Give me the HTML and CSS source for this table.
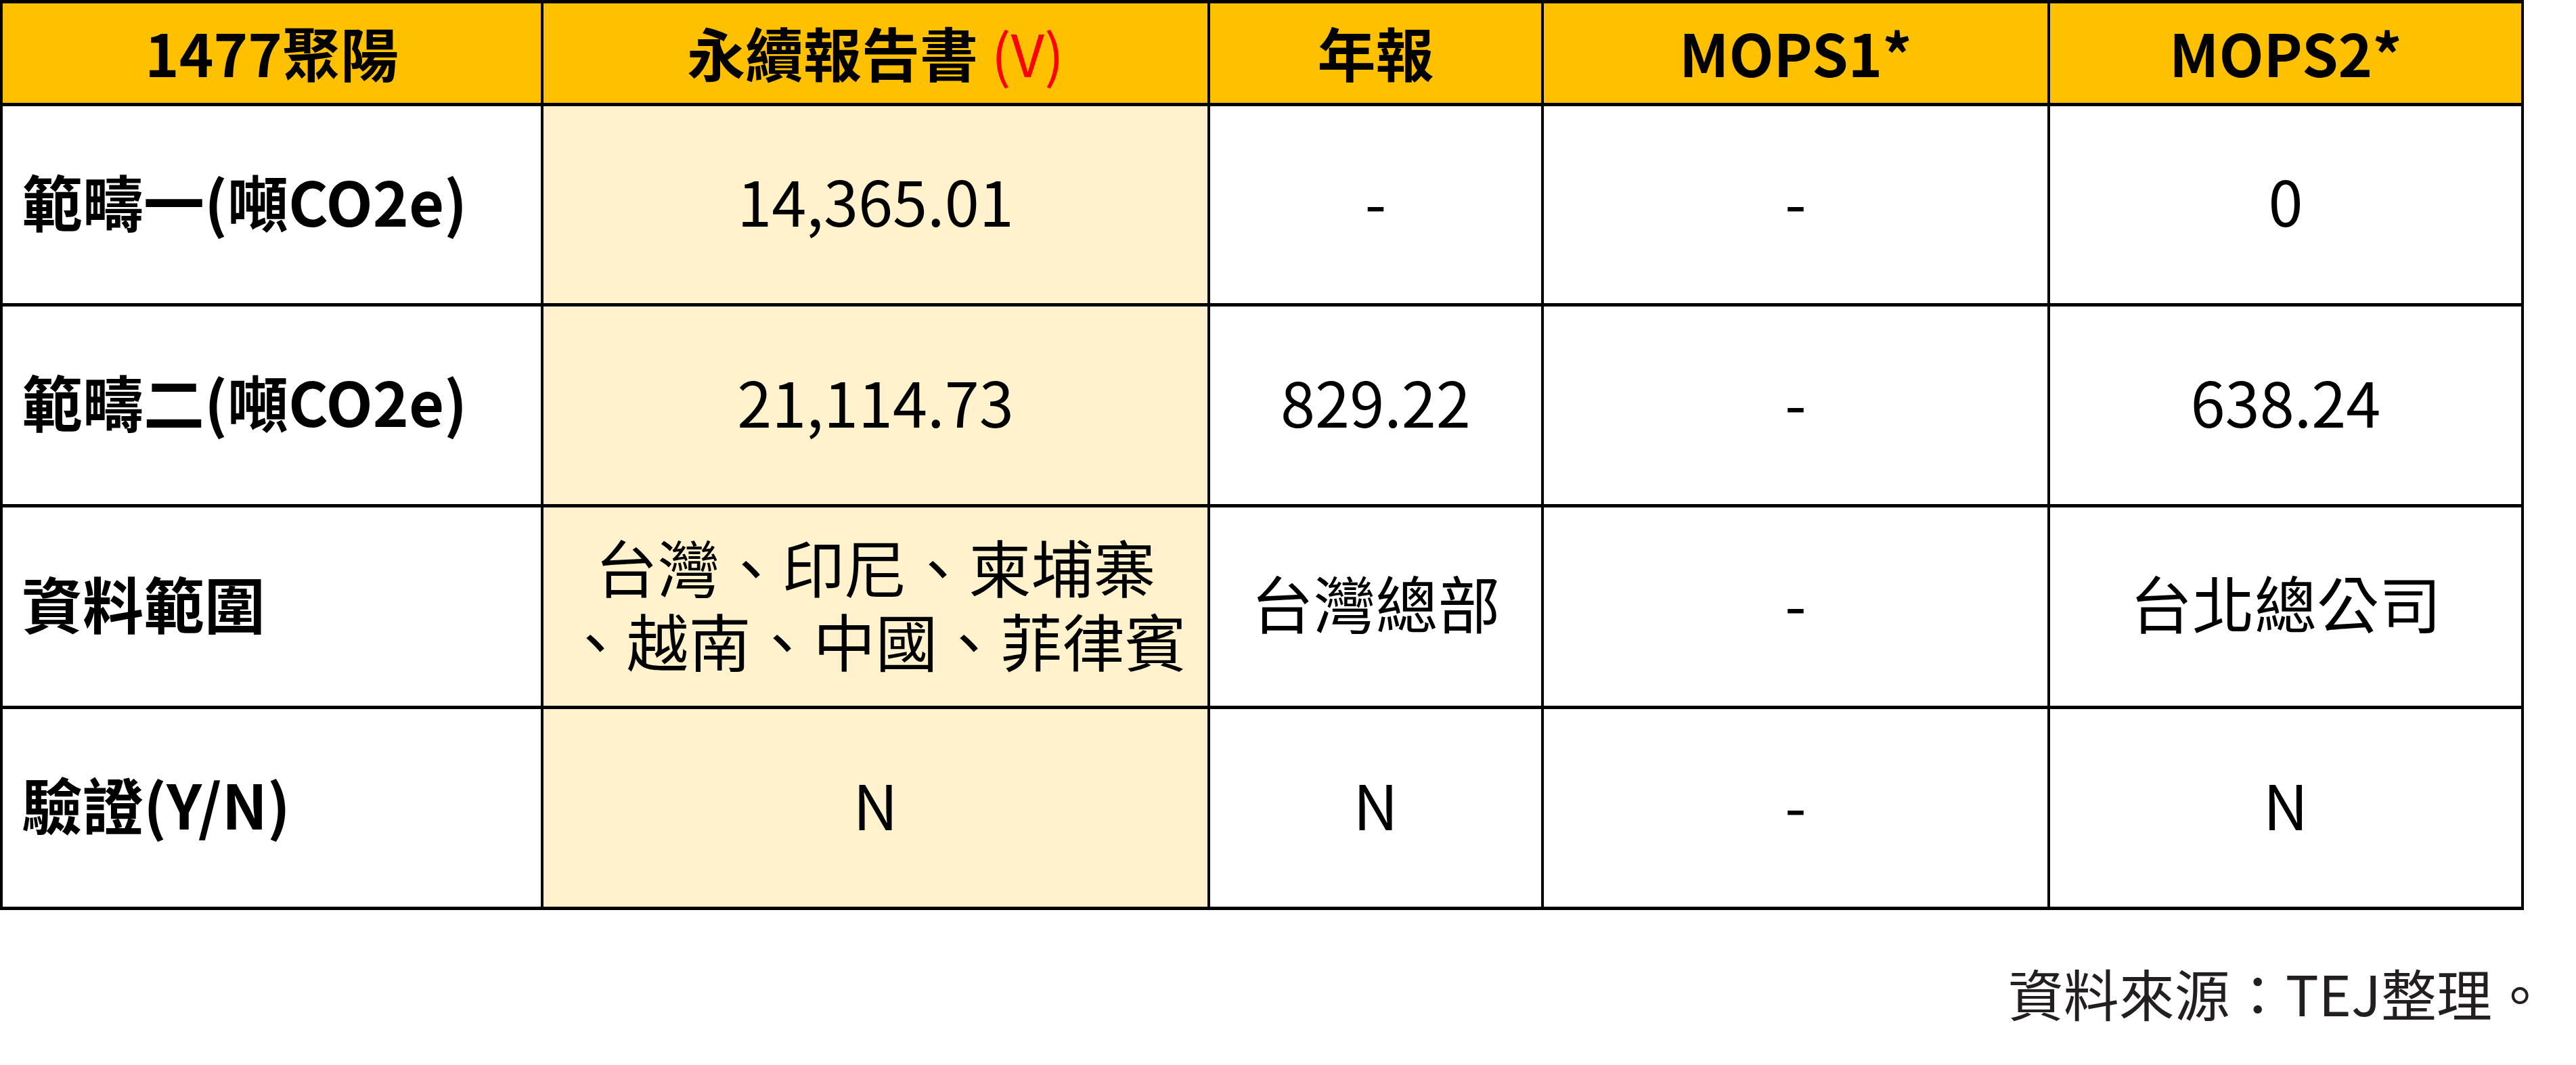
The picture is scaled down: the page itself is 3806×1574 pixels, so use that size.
FILE: index.html
```html
<!DOCTYPE html>
<html lang="zh-Hant">
<head>
<meta charset="utf-8">
<title>1477聚陽 溫室氣體排放</title>
<link rel="stylesheet" href="styles.css">
</head>
<body>
<div class="page">
  <table class="ghg">
    <thead>
      <tr class="head-row">
        <th class="c1">1477聚陽</th>
        <th class="c2">永續報告書 <span class="mark">(V)</span></th>
        <th class="c3">年報</th>
        <th class="c4">MOPS1*</th>
        <th class="c5">MOPS2*</th>
      </tr>
    </thead>
    <tbody>
      <tr class="r1">
        <td class="label">範疇一(噸CO2e)</td>
        <td class="hl">14,365.01</td>
        <td>-</td>
        <td>-</td>
        <td>0</td>
      </tr>
      <tr class="r2">
        <td class="label">範疇二(噸CO2e)</td>
        <td class="hl">21,114.73</td>
        <td>829.22</td>
        <td>-</td>
        <td>638.24</td>
      </tr>
      <tr class="r3">
        <td class="label">資料範圍</td>
        <td class="hl multi"><span class="line">台灣、印尼、柬埔寨</span><span class="line">、越南、中國、菲律賓</span></td>
        <td>台灣總部</td>
        <td>-</td>
        <td>台北總公司</td>
      </tr>
      <tr class="r4">
        <td class="label">驗證(Y/N)</td>
        <td class="hl">N</td>
        <td>N</td>
        <td>-</td>
        <td>N</td>
      </tr>
    </tbody>
  </table>
  <p class="source">資料來源：TEJ整理。</p>
</div>
</body>
</html>
```

FILE: styles.css
```css
html, body {
  margin: 0;
  padding: 0;
  background: #ffffff;
}

body {
  font-family: "Noto Sans CJK TC", "Noto Sans", sans-serif;
  color: #000000;
}

.page {
  width: 3806px;
}

.ghg {
  border-collapse: collapse;
  table-layout: fixed;
  width: 3729px;
}

.ghg th,
.ghg td {
  box-sizing: border-box;
  border-left: 4px solid #000;
  border-right: 4px solid #000;
  border-top: 5px solid #000;
  border-bottom: 5px solid #000;
  padding: 0 8px;
  text-align: center;
  vertical-align: middle;
  white-space: nowrap;
}

.ghg th {
  background: #ffc000;
  font-size: 86px;
  font-weight: 700;
  line-height: 1.2;
  padding-bottom: 4px;
}

.ghg th.c1 { width: 799px; }
.ghg th.c2 { width: 985px; }
.ghg th.c3 { width: 493px; }
.ghg th.c4 { width: 748px; }
.ghg th.c5 { width: 700px; }

.head-row th { height: 152px; }
.r1 td { height: 296px; }
.r2 td { height: 297px; }
.r3 td { height: 298px; }
.r4 td { height: 297px; }

.mark {
  color: #ff0000;
  font-weight: 400;
}

.ghg td {
  font-size: 92px;
  font-weight: 400;
  line-height: 1.2;
  padding-bottom: 14px;
}

.ghg td.label {
  text-align: left;
  padding-left: 28px;
  font-size: 90px;
  font-weight: 700;
}

.ghg td.hl {
  background: #fff2cc;
}

.ghg td.multi {
  line-height: 109px;
}

.ghg td.multi .line {
  display: block;
  height: 109px;
}

.source {
  margin: 72px 0 0 0;
  padding-right: 42px;
  text-align: right;
  font-size: 82px;
  line-height: 100px;
  color: #231f20;
}
```
